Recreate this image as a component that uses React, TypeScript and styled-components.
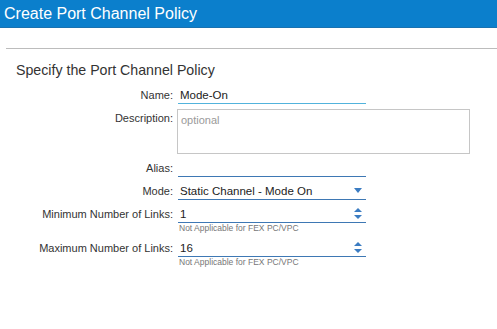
import React from "react";
import styled, { createGlobalStyle } from "styled-components";

const GlobalStyle = createGlobalStyle`
  html, body {
    margin: 0;
    padding: 0;
    background: #fff;
    font-family: "Liberation Sans", Arial, sans-serif;
  }
`;

type FieldProps = { label: string; value?: string; icon?: "select" | "spin"; hint?: string; active?: boolean };

const Caret = () => (
  <svg width="8" height="5" viewBox="0 0 8 5">
    <path d="M0 0 L8 0 L4 5 Z" fill="#3b7cc2" />
  </svg>
);

const Spinner = () => (
  <svg width="8" height="11" viewBox="0 0 8 11">
    <path d="M0 4 L8 4 L4 0 Z" fill="#3b7cc2" />
    <path d="M0 7 L8 7 L4 11 Z" fill="#3b7cc2" />
  </svg>
);

const Field = ({ label, value, icon, hint, active }: FieldProps) => (
  <Row>
    <Label>{label}</Label>
    <Control>
      <Input active={active}>
        <Value>{value}</Value>
        {icon === "select" && <Caret />}
        {icon === "spin" && <Spinner />}
      </Input>
      {hint && <Hint>{hint}</Hint>}
    </Control>
  </Row>
);

export default function App() {
  return (
    <>
      <GlobalStyle />
      <Header>Create Port Channel Policy</Header>
      <Divider />
      <Title>Specify the Port Channel Policy</Title>
      <Form>
        <Field label="Name:" value="Mode-On" active />
        <Row>
          <Label>Description:</Label>
          <TextArea>optional</TextArea>
        </Row>
        <Field label="Alias:" />
        <Field label="Mode:" value="Static Channel - Mode On" icon="select" />
        <Field label="Minimum Number of Links:" value="1" icon="spin" hint="Not Applicable for FEX PC/VPC" />
        <Field label="Maximum Number of Links:" value="16" icon="spin" hint="Not Applicable for FEX PC/VPC" />
      </Form>
    </>
  );
}

const Header = styled.div`
  height: 28px;
  line-height: 28px;
  padding-left: 4px;
  background: #0b7fcc;
  border-bottom: 1px solid #1a72b0;
  color: #fff;
  font-size: 16px;
  box-sizing: border-box;
`;

const Divider = styled.div`
  margin: 20px 0 0 6px;
  border-top: 1px solid #bcbcbc;
`;

const Title = styled.div`
  margin: 12px 0 0 16px;
  font-size: 14.2px;
  line-height: 18px;
  color: #333;
`;

const Form = styled.div`
  display: flex;
  flex-direction: column;
  gap: 5px;
  margin-top: 7px;
`;

const Row = styled.div`
  display: flex;
  align-items: flex-start;
  gap: 5px;
`;

const Label = styled.div`
  width: 173px;
  text-align: right;
  font-size: 11px;
  line-height: 18px;
  color: #333;
`;

const Control = styled.div`
  display: flex;
  flex-direction: column;
  width: 188px;
`;

const Input = styled.div<{ active?: boolean }>`
  display: flex;
  align-items: center;
  justify-content: space-between;
  height: 18px;
  padding: 0 4px 0 2px;
  border-bottom: 1px solid ${(p) => (p.active ? "#52b3dc" : "#3e78b4")};
  box-sizing: border-box;
`;

const Value = styled.span`
  font-size: 11.5px;
  color: #222;
`;

const Hint = styled.div`
  font-size: 8.5px;
  line-height: 11px;
  color: #777;
  padding-left: 1px;
`;

const TextArea = styled.div`
  width: 293px;
  height: 45px;
  margin-left: -1px;
  border: 1px solid #c6c6c6;
  box-sizing: border-box;
  padding: 3px 3px;
  font-size: 11px;
  line-height: 14px;
  color: #9a9a9a;
`;
